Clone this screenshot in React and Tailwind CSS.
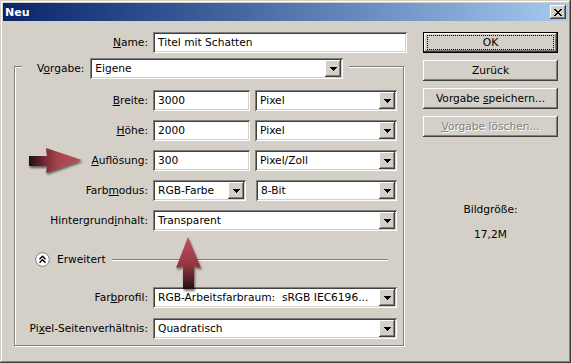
import React from "react";

// Windows classic 3D edges
const RAISED =
  "shadow-[inset_-1px_-1px_#404040,inset_1px_1px_#ffffff,inset_-2px_-2px_#808080,inset_2px_2px_#d4d0c8]";
const SUNKEN =
  "shadow-[inset_1px_1px_#808080,inset_-1px_-1px_#ffffff,inset_2px_2px_#404040,inset_-2px_-2px_#d4d0c8]";

function Key({ children }) {
  return <span className="underline underline-offset-[1px]">{children}</span>;
}

function Input({ w, value }) {
  return (
    <div
      className={`${w} h-[21px] shrink-0 bg-white ${SUNKEN} pl-[5px] flex items-center whitespace-nowrap`}
    >
      {value}
    </div>
  );
}

function Select({ w, value }) {
  return (
    <div className={`${w} h-[21px] shrink-0 bg-white ${SUNKEN} p-[2px] flex`}>
      <div className="flex-1 min-w-0 pl-[3px] flex items-center overflow-hidden whitespace-pre">
        {value}
      </div>
      <div
        className={`w-[16px] h-[17px] shrink-0 bg-[#d4d0c8] ${RAISED} flex items-center justify-center`}
      >
        <svg width="7" height="4" viewBox="0 0 7 4">
          <rect x="0" y="0" width="7" height="1" fill="#000" />
          <rect x="1" y="1" width="5" height="1" fill="#000" />
          <rect x="2" y="2" width="3" height="1" fill="#000" />
          <rect x="3" y="3" width="1" height="1" fill="#000" />
        </svg>
      </div>
    </div>
  );
}

function Row({ label, className, children }) {
  return (
    <div className={`flex items-center gap-[5px] ${className}`}>
      <div className="w-[133px] shrink-0 text-right">{label}</div>
      {children}
    </div>
  );
}

function Button({ children, disabled }) {
  return (
    <div
      className={`h-[21px] bg-[#d4d0c8] ${RAISED} flex items-center justify-center ${
        disabled ? "text-[#808080] [text-shadow:1px_1px_0_#ffffff]" : ""
      }`}
    >
      <span>{children}</span>
    </div>
  );
}

function DefaultButton({ children }) {
  return (
    <div className="h-[21px] border border-black">
      <div className={`h-full bg-[#d4d0c8] ${RAISED} px-[3px] py-[2px]`}>
        <div className="h-full border border-dotted border-black flex items-center justify-center">
          {children}
        </div>
      </div>
    </div>
  );
}

function CloseButton() {
  return (
    <div className={`w-[16px] h-[14px] bg-[#d4d0c8] ${RAISED} flex items-center justify-center`}>
      <svg width="8" height="7" viewBox="0 0 8 7">
        <path
          d="M0 0h2v1H0zM6 0h2v1H6zM1 1h2v1H1zM5 1h2v1H5zM2 2h4v1H2zM3 3h2v1H3zM2 4h4v1H2zM1 5h2v1H1zM5 5h2v1H5zM0 6h2v1H0zM6 6h2v1H6z"
          fill="#000"
        />
      </svg>
    </div>
  );
}

function ExpandIcon() {
  return (
    <svg width="15" height="15" viewBox="0 0 15 15" className="shrink-0">
      <circle cx="7.5" cy="7.5" r="6.8" fill="#ffffff" stroke="#808080" />
      <path
        d="M4.5 7.2 L7.5 4.2 L10.5 7.2 M4.5 10.7 L7.5 7.7 L10.5 10.7"
        fill="none"
        stroke="#000"
        strokeWidth="1.4"
      />
    </svg>
  );
}

// red annotation arrows drawn over the dialog
function Arrows() {
  return (
    <svg
      width="571"
      height="363"
      viewBox="0 0 571 363"
      className="absolute left-0 top-0 pointer-events-none"
    >
      <defs>
        <filter id="sh" x="-30%" y="-30%" width="160%" height="160%">
          <feDropShadow dx="1" dy="2" stdDeviation="1.2" floodColor="#000" floodOpacity="0.55" />
        </filter>
        <linearGradient id="rh" x1="0" y1="0" x2="1" y2="0">
          <stop offset="0" stopColor="#1e0f10" />
          <stop offset="0.3" stopColor="#7a2a34" />
          <stop offset="0.55" stopColor="#a8434f" />
          <stop offset="1" stopColor="#b44e5a" />
        </linearGradient>
        <linearGradient id="uh" x1="0" y1="0" x2="0" y2="1">
          <stop offset="0" stopColor="#b9525e" />
          <stop offset="0.5" stopColor="#9a3844" />
          <stop offset="0.8" stopColor="#5a1f24" />
          <stop offset="1" stopColor="#1e0f10" />
        </linearGradient>
      </defs>
      <polygon
        points="29,156 47,156 46,148 82,160 46,173 47,166 29,166"
        fill="url(#rh)"
        filter="url(#sh)"
      />
      <polygon
        points="188,237 201,268 194,266 194,289 183,289 183,266 176,268"
        fill="url(#uh)"
        filter="url(#sh)"
      />
    </svg>
  );
}

export default function App() {
  return (
    <div
      className={`relative w-[571px] h-[363px] bg-[#d4d0c8] p-[3px] flex flex-col text-[10.65px] leading-[13px] text-black font-['DejaVu_Sans',sans-serif] shadow-[inset_-1px_-1px_#404040,inset_1px_1px_#d4d0c8,inset_-2px_-2px_#808080,inset_2px_2px_#ffffff]`}
    >
      {/* title bar */}
      <div className="h-[18px] shrink-0 bg-linear-to-r from-[#0a246a] to-[#a6caf0] flex items-center justify-between pl-[2px] pr-[2px]">
        <span className="text-white font-bold text-[11px]">Neu</span>
        <CloseButton />
      </div>

      <div className="flex">
        {/* left part */}
        <div className="w-[420px] shrink-0 flex flex-col">
          <div className="mt-[11px] flex items-center gap-[5px]">
            <div className="w-[145px] text-right">
              <Key>N</Key>ame:
            </div>
            <Input w="w-[254px]" value="Titel mit Schatten" />
          </div>

          {/* group box */}
          <div className="ml-[11px] mt-[13px] w-[390px] h-[280px] border border-[#808080] shadow-[1px_1px_0_#ffffff,inset_1px_1px_0_#ffffff] flex flex-col">
            <div className="-mt-[9px] ml-[7px] self-start bg-[#d4d0c8] pl-[15px] pr-[6px] flex items-center gap-[6px]">
              <span>
                V<Key>o</Key>rgabe:
              </span>
              <Select w="w-[253px]" value="Eigene" />
            </div>

            <Row className="mt-[11px]" label={<><Key>B</Key>reite:</>}>
              <Input w="w-[97px]" value="3000" />
              <Select w="w-[142px]" value="Pixel" />
            </Row>
            <Row className="mt-[9px]" label={<><Key>H</Key>öhe:</>}>
              <Input w="w-[97px]" value="2000" />
              <Select w="w-[142px]" value="Pixel" />
            </Row>
            <Row className="mt-[9px]" label={<><Key>A</Key>uflösung:</>}>
              <Input w="w-[97px]" value="300" />
              <Select w="w-[142px]" value="Pixel/Zoll" />
            </Row>
            <Row className="mt-[9px]" label={<>Farb<Key>m</Key>odus:</>}>
              <Select w="w-[93px]" value="RGB-Farbe" />
              <div className="ml-[5px]">
                <Select w="w-[141px]" value="8-Bit" />
              </div>
            </Row>
            <Row className="mt-[9px]" label={<>Hintergrund<Key>i</Key>nhalt:</>}>
              <Select w="w-[244px]" value="Transparent" />
            </Row>

            <div className="mt-[21px] h-[16px] pl-[20px] pr-[15px] flex items-start">
              <ExpandIcon />
              <span className="ml-[7px] leading-[15px]">Erweitert</span>
              <div className="ml-[6px] mt-[7px] flex-1 h-[2px] border-t border-t-[#808080] border-b border-b-white" />
            </div>

            <Row className="mt-[19px]" label={<>Far<Key>b</Key>profil:</>}>
              <Select w="w-[244px]" value="RGB-Arbeitsfarbraum:  sRGB IEC6196..." />
            </Row>
            <Row className="mt-[10px]" label={<>Pi<Key>x</Key>el-Seitenverhältnis:</>}>
              <Select w="w-[244px]" value="Quadratisch" />
            </Row>
          </div>
        </div>

        {/* right column */}
        <div className="w-[135px] shrink-0 mt-[11px] flex flex-col">
          <div className="flex flex-col gap-[7px]">
            <DefaultButton>OK</DefaultButton>
            <Button>Zurück</Button>
            <Button>
              Vorgabe <Key>s</Key>peichern...
            </Button>
            <Button disabled>
              <Key>V</Key>orgabe löschen...
            </Button>
          </div>
          <div className="mt-[66px] text-center">Bildgröße:</div>
          <div className="mt-[12px] text-center">17,2M</div>
        </div>
      </div>

      <Arrows />
    </div>
  );
}
